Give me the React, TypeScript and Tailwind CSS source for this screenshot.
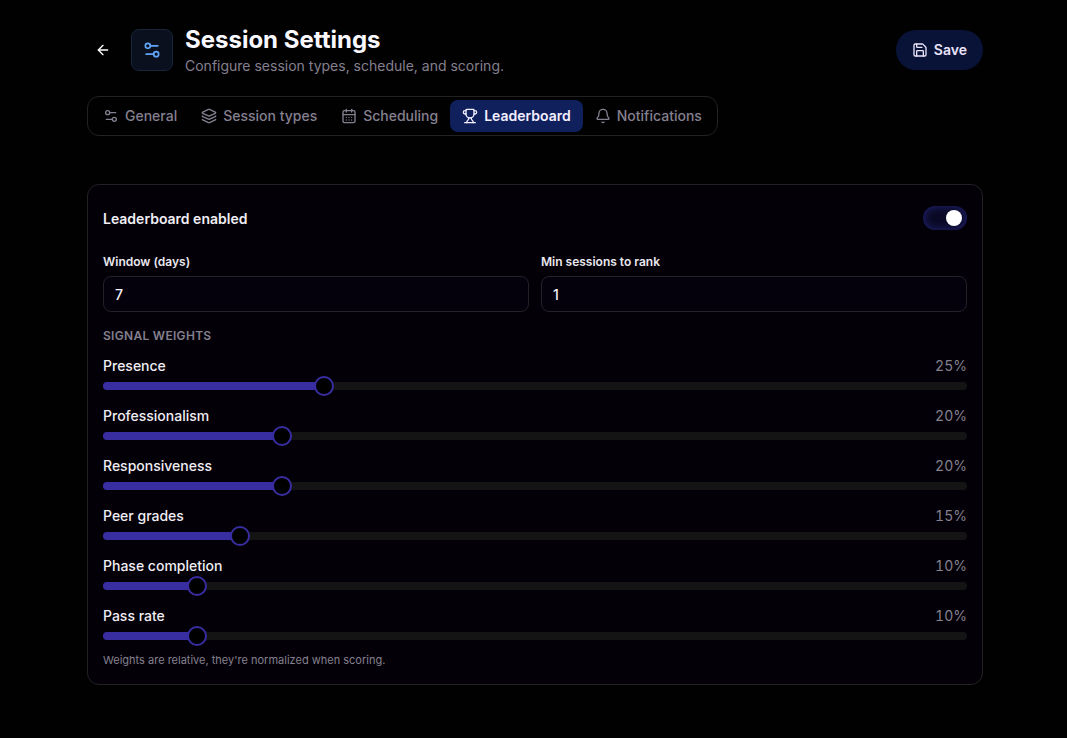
import { useState } from "react";
import {
  ArrowLeft,
  Bell,
  CalendarDays,
  Layers,
  Save,
  Settings2,
  Trophy,
  type LucideIcon,
} from "lucide-react";

type Tab = { label: string; icon: LucideIcon };

const tabs: Tab[] = [
  { label: "General", icon: Settings2 },
  { label: "Session types", icon: Layers },
  { label: "Scheduling", icon: CalendarDays },
  { label: "Leaderboard", icon: Trophy },
  { label: "Notifications", icon: Bell },
];

const initialWeights = [
  { id: "presence", label: "Presence", value: 25 },
  { id: "professionalism", label: "Professionalism", value: 20 },
  { id: "responsiveness", label: "Responsiveness", value: 20 },
  { id: "peer-grades", label: "Peer grades", value: 15 },
  { id: "phase-completion", label: "Phase completion", value: 10 },
  { id: "pass-rate", label: "Pass rate", value: 10 },
];

function Header() {
  return (
    <header className="flex items-center justify-between gap-4">
      <div className="flex items-center gap-3">
        <button
          type="button"
          aria-label="Back"
          className="flex size-8 items-center justify-center text-white"
        >
          <ArrowLeft className="size-4" />
        </button>
        <div className="rounded-lg border border-[#17263b] bg-[#0a101d] p-2.5 text-[#60a5fa]">
          <Settings2 className="size-5" />
        </div>
        <div>
          <h1 className="text-2xl leading-8 font-bold text-[#faf8ff]">
            Session Settings
          </h1>
          <p className="text-sm text-[#85808f]">
            Configure session types, schedule, and scoring.
          </p>
        </div>
      </div>
      <button
        type="button"
        className="flex h-10 items-center gap-1.5 rounded-full bg-[#081337] px-4 text-sm font-semibold text-[#ebe4fb]"
      >
        <Save className="size-4" />
        Save
      </button>
    </header>
  );
}

function Tabs({
  active,
  onChange,
}: {
  active: string;
  onChange: (label: string) => void;
}) {
  return (
    <nav className="mt-5 flex w-fit rounded-xl border border-[#222225] p-[3px]">
      {tabs.map(({ label, icon: Icon }) => (
        <button
          key={label}
          type="button"
          onClick={() => onChange(label)}
          className={
            label === active
              ? "flex h-8 items-center gap-1.5 rounded-lg bg-[#10205d] px-3 text-sm font-semibold text-[#f3efff]"
              : "flex h-8 items-center gap-1.5 rounded-lg px-3 text-sm font-medium text-[#85808f]"
          }
        >
          <Icon className="size-4" />
          {label}
        </button>
      ))}
    </nav>
  );
}

function NumberField({
  id,
  label,
  initial,
}: {
  id: string;
  label: string;
  initial: string;
}) {
  return (
    <div className="flex flex-col gap-1.5">
      <label
        htmlFor={id}
        className="text-xs font-semibold text-[#e9e7ee]"
      >
        {label}
      </label>
      <input
        id={id}
        type="text"
        inputMode="numeric"
        defaultValue={initial}
        className="h-9 w-full rounded-lg border border-[#232229] bg-[#04010c] px-[11px] text-sm font-medium text-[#f4f2f8] outline-none"
      />
    </div>
  );
}

function WeightSlider({
  id,
  label,
  value,
  onChange,
}: {
  id: string;
  label: string;
  value: number;
  onChange: (value: number) => void;
}) {
  return (
    <div className="flex flex-col gap-1.5">
      <div className="flex justify-between text-sm">
        <label
          htmlFor={id}
          className="font-medium text-[#f0eef4]"
        >
          {label}
        </label>
        <span className="text-[#85808f] tabular-nums">{value}%</span>
      </div>
      <input
        id={id}
        type="range"
        min={0}
        max={100}
        value={value}
        onChange={(e) => onChange(Number(e.target.value))}
        style={{
          backgroundImage: `linear-gradient(to right, #392da2 ${value}%, #141414 ${value}%)`,
        }}
        className="block h-2 w-full appearance-none rounded-full outline-none [&::-webkit-slider-runnable-track]:h-2 [&::-webkit-slider-thumb]:-mt-1.5 [&::-webkit-slider-thumb]:size-5 [&::-webkit-slider-thumb]:appearance-none [&::-webkit-slider-thumb]:rounded-full [&::-webkit-slider-thumb]:border-2 [&::-webkit-slider-thumb]:border-solid [&::-webkit-slider-thumb]:border-[#392da2] [&::-webkit-slider-thumb]:bg-black"
      />
    </div>
  );
}

export default function App() {
  const [activeTab, setActiveTab] = useState("Leaderboard");
  const [enabled, setEnabled] = useState(true);
  const [weights, setWeights] = useState(initialWeights);

  const setWeight = (id: string, value: number) =>
    setWeights(weights.map((w) => (w.id === id ? { ...w, value } : w)));

  return (
    <div className="min-h-screen bg-[#010102] pl-[3px] font-['Inter',sans-serif]">
      <main className="mx-auto max-w-4xl py-6">
        <Header />
        <Tabs
          active={activeTab}
          onChange={setActiveTab}
        />
        <section className="mt-12 rounded-xl border border-[#222225] bg-[#030007] px-[15px] pt-[21px] pb-4">
          <div className="flex items-start justify-between">
            <label
              htmlFor="enabled"
              className="text-sm leading-[26px] font-semibold text-[#f0eef4]"
            >
              Leaderboard enabled
            </label>
            <input
              id="enabled"
              type="checkbox"
              role="switch"
              checked={enabled}
              onChange={(e) => setEnabled(e.target.checked)}
              className="h-6 w-11 appearance-none rounded-full bg-[#0a0a26] p-1 inset-shadow-[0_0_8px_#25257a] before:block before:size-4 before:rounded-full before:bg-white checked:before:ml-[19px]"
            />
          </div>
          <div className="mt-[22px] grid grid-cols-2 gap-3">
            <NumberField
              id="window-days"
              label="Window (days)"
              initial="7"
            />
            <NumberField
              id="min-sessions"
              label="Min sessions to rank"
              initial="1"
            />
          </div>
          <h2 className="mt-4 text-xs font-semibold tracking-wide text-[#85808f] uppercase">
            Signal weights
          </h2>
          <div className="mt-3 flex flex-col gap-4">
            {weights.map((w) => (
              <WeightSlider
                key={w.id}
                id={w.id}
                label={w.label}
                value={w.value}
                onChange={(value) => setWeight(w.id, value)}
              />
            ))}
          </div>
          <p className="mt-3 text-[11px] leading-4 text-[#85808f]">
            Weights are relative, they're normalized when scoring.
          </p>
        </section>
      </main>
    </div>
  );
}
